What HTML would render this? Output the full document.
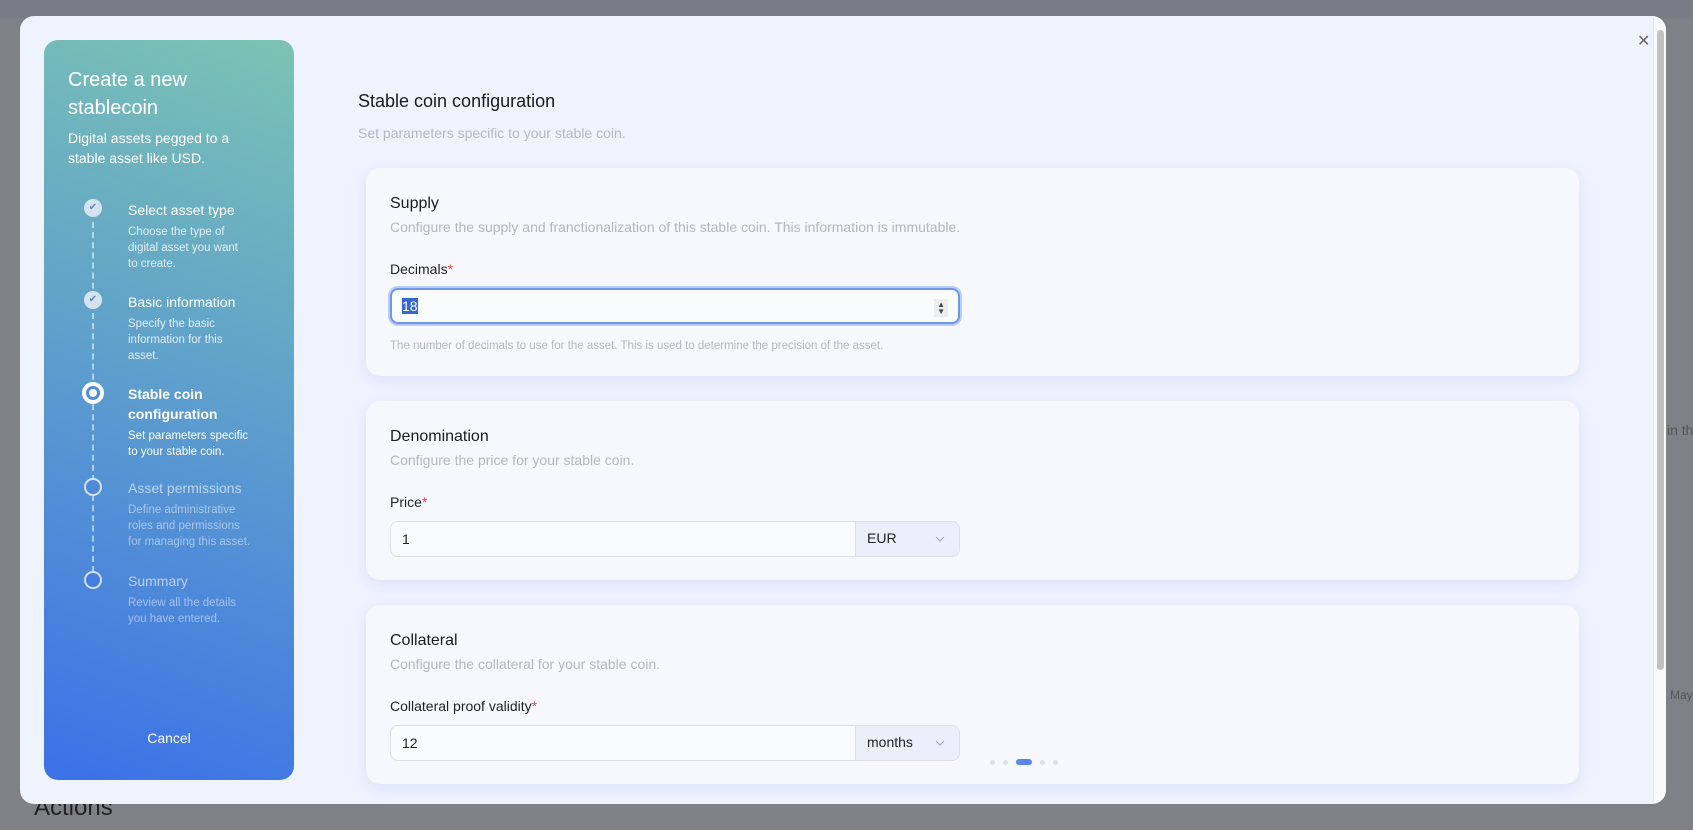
<!DOCTYPE html>
<html><head><meta charset="utf-8"><style>
*{box-sizing:border-box;margin:0;padding:0}
body{width:1693px;height:830px;overflow:hidden;background:#808187;font-family:"Liberation Sans",sans-serif;position:relative}
.bgbar{position:absolute;left:0;top:0;width:1693px;height:18px;background:#797c86}
.bgtext{position:absolute;color:#555;font-size:14px;white-space:nowrap}
.modal{position:absolute;left:20px;top:16px;width:1646px;height:788px;background:#eff3fe;border-radius:14px;overflow:hidden}
.scroll{position:absolute;right:0;top:0;width:13px;height:100%;background:#fafafa;border-left:1px solid #e8e8e8}
.thumb{position:absolute;left:3px;top:14px;width:7px;height:640px;background:#c1c1c1;border-radius:4px}
.close{position:absolute;left:1617px;top:15px;font-size:16px;color:#666}
.side{position:absolute;left:24px;top:24px;width:250px;height:740px;border-radius:14px;background:linear-gradient(200deg,#7cc3b3 0%,#5fa0cc 45%,#3b70e8 100%);color:#fff}
.side h1{position:absolute;left:24px;top:26px;font-size:20px;font-weight:normal;line-height:28px;width:200px}
.side .sub{position:absolute;left:24px;top:88px;font-size:14px;line-height:20px;width:190px}
.step{position:absolute;left:84px;width:122px}
.step .t{font-size:14px;line-height:20px}
.step .d{font-size:11.5px;line-height:16px;margin-top:4px;opacity:.8}
.dot{position:absolute;left:40px;width:18px;height:18px;border-radius:50%}
.line{position:absolute;left:48px;top:182px;height:350px;border-left:2px dashed rgba(255,255,255,.55)}
.cancel{position:absolute;left:0;width:250px;top:690px;text-align:center;font-size:14px}
h2{position:absolute;left:338px;top:75px;font-size:18px;font-weight:normal;color:#1b1b1b}
.psub{position:absolute;left:338px;top:109px;font-size:14px;color:#b6b9c4}
.card{position:absolute;left:346px;width:1213px;background:#f7f8fd;border-radius:14px;box-shadow:0 4px 14px rgba(180,190,240,.35)}
.card .h{position:absolute;left:24px;top:27px;font-size:16px;color:#1b1b1b}
.card .s{position:absolute;left:24px;top:51px;font-size:14px;color:#b4b7c0}
.card .l{position:absolute;left:24px;top:93px;font-size:14px;color:#222}
.card .l b{color:#e44;font-weight:normal}
.inp{position:absolute;left:24px;top:120px;width:570px;height:36px;border:1px solid #dcdfe6;border-radius:8px;background:#fafbfd;font-size:14px;color:#222;padding:9px 11px}
.sel{position:absolute;right:0;top:0;width:104px;height:34px;background:#eceffb;border-left:1px solid #dcdfe6;border-radius:0 7px 7px 0;padding:8px 11px}
.sel svg{position:absolute;right:14px;top:14px}
</style></head><body>
<div class="bgbar"></div>
<div class="bgtext" style="left:34px;top:794px;font-size:24px;color:#222">Actions</div>
<div class="modal">
 <div class="side">
  <h1>Create a new stablecoin</h1>
  <div class="sub">Digital assets pegged to a stable asset like USD.</div>
  <div class="line"></div>
  <div class="dot" style="top:159px;background:#d5e3ee;color:#5a8bc9;font-size:10px;text-align:center;line-height:18px">✔</div>
  <div class="step" style="top:160px"><div class="t">Select asset type</div><div class="d">Choose the type of digital asset you want to create.</div></div>
  <div class="dot" style="top:251px;background:#d5e3ee;color:#5a8bc9;font-size:10px;text-align:center;line-height:18px">✔</div>
  <div class="step" style="top:252px"><div class="t">Basic information</div><div class="d">Specify the basic information for this asset.</div></div>
  <div class="dot" style="top:342px;left:38px;width:22px;height:22px;border:4px solid #fff;background:#4f8fdc"><div style="position:absolute;left:3px;top:3px;width:8px;height:8px;border-radius:50%;background:#fff"></div></div>
  <div class="step" style="top:344px"><div class="t" style="font-weight:bold">Stable coin configuration</div><div class="d" style="opacity:1">Set parameters specific to your stable coin.</div></div>
  <div class="dot" style="top:438px;border:2px solid rgba(255,255,255,.75);background:#4f8ad8"></div>
  <div class="step" style="top:438px;opacity:.6;width:140px"><div class="t">Asset permissions</div><div class="d">Define administrative<br>roles and permissions<br>for managing this asset.</div></div>
  <div class="dot" style="top:531px;border:2px solid rgba(255,255,255,.75);background:#467de0"></div>
  <div class="step" style="top:531px;opacity:.6"><div class="t">Summary</div><div class="d">Review all the details you have entered.</div></div>
  <div class="cancel">Cancel</div>
 </div>
 <h2>Stable coin configuration</h2>
 <div class="psub">Set parameters specific to your stable coin.</div>
 <div class="card" style="top:152px;height:208px">
  <div class="h">Supply</div>
  <div class="s">Configure the supply and franctionalization of this stable coin. This information is immutable.</div>
  <div class="l">Decimals<b>*</b></div>
  <div class="inp" style="border:2px solid #6f96ef;box-shadow:0 0 0 2px #b9cdf8;padding:8px 10px"><span style="background:#3367d6;color:#fff">18</span><span style="position:absolute;right:10px;top:9px;font-size:8px;line-height:7px;color:#444;background:#eee;padding:2px 3px">▲<br>▼</span></div>
  <div class="s" style="top:172px;font-size:11.5px">The number of decimals to use for the asset. This is used to determine the precision of the asset.</div>
 </div>
 <div class="card" style="top:385px;height:179px">
  <div class="h">Denomination</div>
  <div class="s">Configure the price for your stable coin.</div>
  <div class="l">Price<b>*</b></div>
  <div class="inp">1<div class="sel">EUR<svg width="10" height="6" viewBox="0 0 10 6"><path d="M1 1l4 4 4-4" fill="none" stroke="#aaa" stroke-width="1.2"/></svg></div></div>
 </div>
 <div class="card" style="top:589px;height:179px">
  <div class="h">Collateral</div>
  <div class="s">Configure the collateral for your stable coin.</div>
  <div class="l">Collateral proof validity<b>*</b></div>
  <div class="inp">12<div class="sel">months<svg width="10" height="6" viewBox="0 0 10 6"><path d="M1 1l4 4 4-4" fill="none" stroke="#aaa" stroke-width="1.2"/></svg></div></div>
 </div>
 <div style="position:absolute;left:970px;top:743px;display:flex;gap:8px;align-items:center">
  <span style="width:5px;height:5px;border-radius:50%;background:#dde1ea"></span>
  <span style="width:5px;height:5px;border-radius:50%;background:#dde1ea"></span>
  <span style="width:16px;height:6px;border-radius:3px;background:#5a86ea"></span>
  <span style="width:5px;height:5px;border-radius:50%;background:#dde1ea"></span>
  <span style="width:5px;height:5px;border-radius:50%;background:#dde1ea"></span>
 </div>
 <div class="close">✕</div>
 <div class="scroll"><div class="thumb"></div></div>
</div>
<div class="bgtext" style="left:1667px;top:422px">in th</div>
<div class="bgtext" style="left:1670px;top:688px;font-size:12px">May</div>
</body></html>
